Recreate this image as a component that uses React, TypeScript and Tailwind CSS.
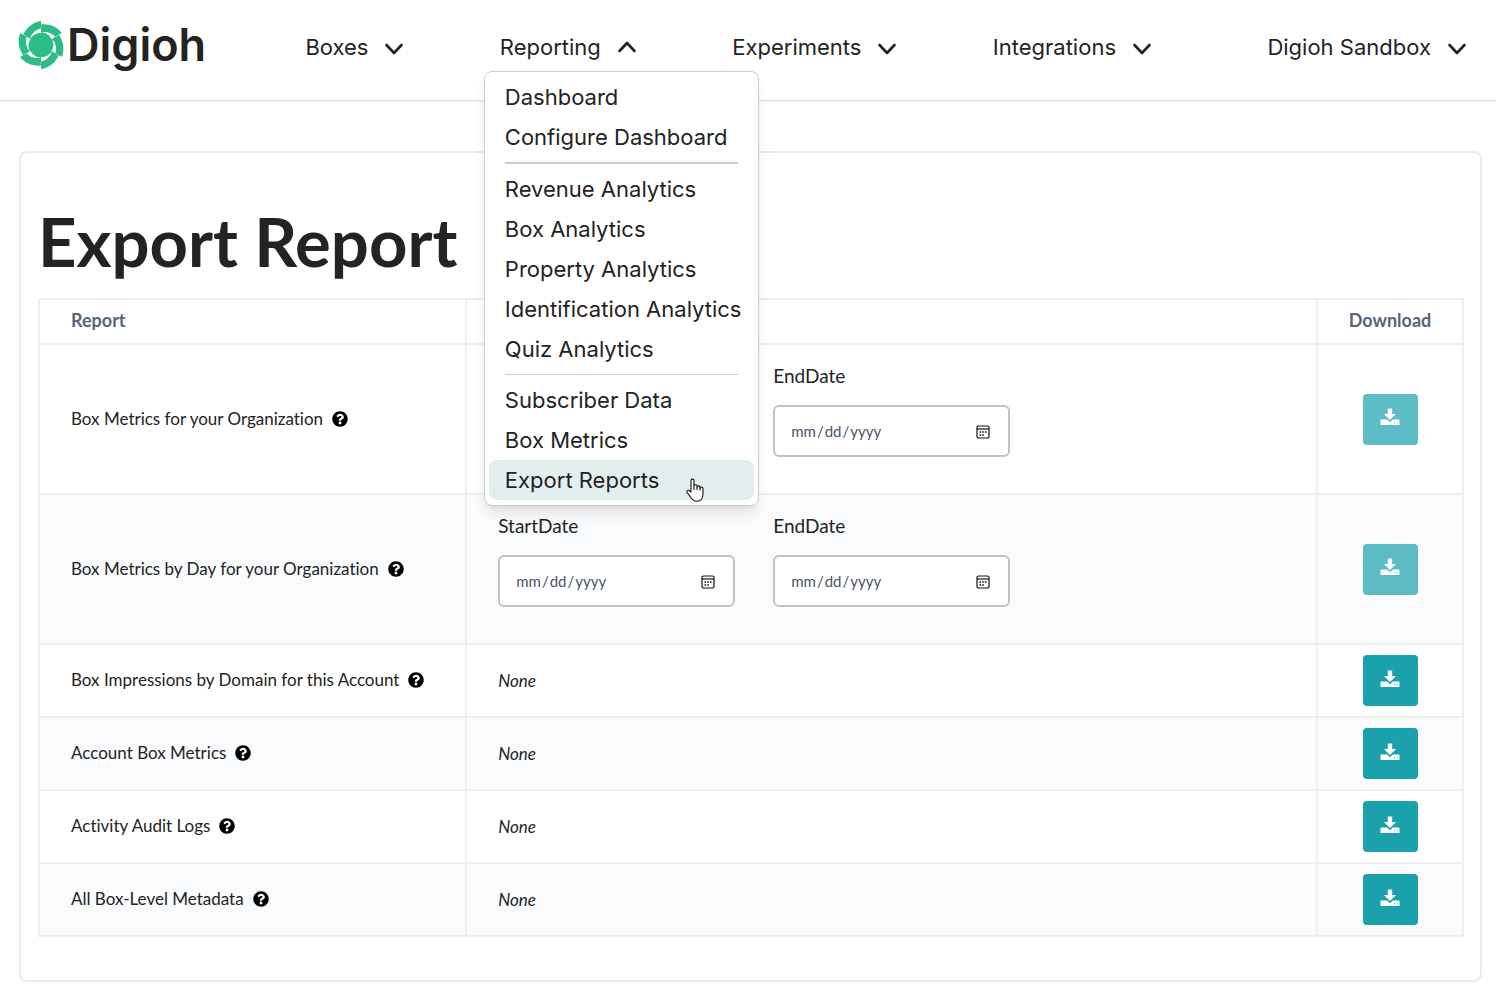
import React from 'react';
import { FaQuestionCircle } from 'react-icons/fa';

const NAV_ITEMS = [
  { label: 'Boxes', open: false },
  { label: 'Reporting', open: true },
  { label: 'Experiments', open: false },
  { label: 'Integrations', open: false },
  { label: 'Digioh Sandbox', open: false },
];

const MENU_GROUPS = [
  ['Dashboard', 'Configure Dashboard'],
  ['Revenue Analytics', 'Box Analytics', 'Property Analytics', 'Identification Analytics', 'Quiz Analytics'],
  ['Subscriber Data', 'Box Metrics', 'Export Reports'],
];

const REPORTS = [
  { name: 'Box Metrics for your Organization', id: 'org', dates: true },
  { name: 'Box Metrics by Day for your Organization', id: 'org-day', dates: true },
  { name: 'Box Impressions by Domain for this Account', id: 'domain', dates: false },
  { name: 'Account Box Metrics', id: 'account', dates: false },
  { name: 'Activity Audit Logs', id: 'audit', dates: false },
  { name: 'All Box-Level Metadata', id: 'metadata', dates: false },
];

const BLADES = [0, 60, 120, 180, 240, 300];

const Logo: React.FC = () => (
  <a href="#" className="flex w-[193px] items-center gap-0.5 text-[#232323]" aria-label="Digioh">
    <svg viewBox="-25 -25 50 50" className="h-12 w-12 shrink-0" aria-hidden="true">
      <circle r="18" fill="#2bbd85" />
      {BLADES.map((angle) => (
        <path key={angle} transform={`rotate(${angle})`} d="M0-12L-12-8L-18.5-10.7C-15.5-18-8-24 0-25Z" fill="#2bbd85" />
      ))}
      {BLADES.map((angle) => (
        <path key={angle} transform={`rotate(${angle})`} d="M-11.4-6.6C-10-11.5-6-16 0-17.3V-12.6C-4.5-12.8-8.5-11-11.4-6.6Z" fill="#fff" />
      ))}
    </svg>
    <span className="font-['Inter'] text-[45px] leading-[50px] font-semibold">Digioh</span>
  </a>
);

const Chevron: React.FC<{ up?: boolean }> = ({ up }) => (
  <svg viewBox="0 0 20 20" className="size-5" fill="none" stroke="#232323" strokeWidth="2.6" strokeLinecap="round" strokeLinejoin="round" aria-hidden="true">
    <path d={up ? 'M2.5 14L10 6L17.5 14' : 'M2.5 8L10 16L17.5 8'} />
  </svg>
);

const HandCursor: React.FC = () => (
  <svg viewBox="0 0 18 24" className="absolute top-[18px] left-[197px] h-6 w-[18px]" fill="#fff" stroke="#111" strokeWidth="1.1" strokeLinejoin="round" aria-hidden="true">
    <path d="M5 14V2.5C5 .6 8 .6 8 2.5V8C8 6.3 11 6.5 11 8.2V9C11 7.4 14 7.6 14 9.2V10C14 8.6 17 8.8 17 10.6V16C17 20.5 14.5 23.3 11 23.3C7.5 23.3 6.2 21.6 4.8 19.5L1.2 14.6C.2 13 2 11.6 3.4 12.8Z" />
    <path d="M8 8V12M11 9V12M14 10V12.5" />
  </svg>
);

const ReportingMenu: React.FC = () => (
  <div className="absolute top-[71px] -left-4 z-10 w-[275px] rounded-lg border border-[#cdcdcd] bg-white px-1 py-[5px] shadow-lg">
    {MENU_GROUPS.map((group, i) => (
      <ul key={i}>
        {i > 0 && (
          <li className={`mx-4 my-[5px] border-[#cdcdcd] ${i === 1 ? 'border-t-2' : 'border-t'}`} role="separator" />
        )}
        {group.map((item) => (
          <li key={item} className="relative">
            <a
              href="#"
              className={`block rounded-lg px-4 text-[22px] leading-10 whitespace-nowrap ${item === 'Export Reports' ? 'bg-[#e3eeee]' : ''}`}
            >
              {item}
            </a>
            {item === 'Export Reports' && <HandCursor />}
          </li>
        ))}
      </ul>
    ))}
  </div>
);

const DateField: React.FC<{ id: string; label: string }> = ({ id, label }) => (
  <div className="w-[237px]">
    <label htmlFor={id} className="block text-[19px] leading-6">{label}</label>
    <div className="relative mt-[17px]">
      <input
        id={id}
        type="date"
        className="h-[52px] w-full rounded-md border-2 border-[#c0c2c6] bg-white px-[15px] text-[15px] text-[#4a5568] [&::-webkit-calendar-picker-indicator]:opacity-0"
      />
      <svg viewBox="0 0 14 14" className="pointer-events-none absolute top-5 right-5 size-[14px]" fill="none" stroke="#111" aria-hidden="true">
        <rect x="1" y="1" width="12" height="12" rx="1.6" strokeWidth="1.2" />
        <path d="M1 4H13" strokeWidth="1.2" />
        <path d="M3.5 7H11M3.5 10H8.5" strokeWidth="1.6" strokeDasharray="1.6 1.1" />
      </svg>
    </div>
  </div>
);

const DownloadIcon: React.FC = () => (
  <svg viewBox="0 0 20 18" className="h-[18px] w-5" fill="#fff" aria-hidden="true">
    <path d="M7.8 0.5H12.2V6H16L10 12L4 6H7.8Z" />
    <path fillRule="evenodd" d="M1 11.4H7.2L10 14.2L12.8 11.4H19Q19.5 11.4 19.5 12V16.4Q19.5 17 19 17H1Q.5 17 .5 16.4V12Q.5 11.4 1 11.4ZM14 14.2V15.2H15V14.2ZM16.6 14.2V15.2H17.6V14.2Z" />
  </svg>
);

const App: React.FC = () => {
  return (
    <div className="min-h-screen bg-white pb-3 font-['Lato',sans-serif] text-[#232323] [font-variant-ligatures:none]">
      <header className="flex h-[101px] items-start justify-between border-b border-[#e0e0e0] pr-[29px] pl-[17px] font-['Inter',sans-serif] shadow-xs">
        <div className="pt-5">
          <Logo />
        </div>
        {NAV_ITEMS.map((item) => (
          <div key={item.label} className="relative last:ml-5">
            <button type="button" className="flex items-center gap-4 pt-8 text-[22px] leading-[30px]" aria-expanded={item.open}>
              {item.label}
              <Chevron up={item.open} />
            </button>
            {item.open && <ReportingMenu />}
          </div>
        ))}
      </header>

      <main className="mt-[50px] mr-[14px] ml-[19px] rounded-lg border-2 border-[#ebebeb] pt-12 pr-4 pb-[43px] pl-[17px]">
        <h1 className="text-[67px] leading-[80px] font-bold">Export Report</h1>
        <table className="mt-[17px] w-full table-fixed border-collapse text-[17px]">
          <colgroup>
            <col className="w-[30%]" />
            <col />
            <col className="w-[146px]" />
          </colgroup>
          <thead>
            <tr className="h-[45px] text-lg text-[#56657a]">
              <th className="border-2 border-[#eeefef] px-[31px] pb-1 text-left font-bold">Report</th>
              <th className="border-2 border-[#eeefef]" />
              <th className="border-2 border-[#eeefef] pb-1 font-bold">Download</th>
            </tr>
          </thead>
          <tbody>
            {REPORTS.map((report) => (
              <tr key={report.id} className="even:bg-[#f9fbfd]">
                <td className="border-2 border-[#eeefef] px-[31px] pb-px">
                  <div className="flex items-center gap-[9px] whitespace-nowrap">
                    {report.name}
                    <FaQuestionCircle className="size-4 shrink-0 text-black" />
                  </div>
                </td>
                <td className="border-2 border-[#eeefef] px-[31px]">
                  {report.dates ? (
                    <div className="flex h-[148px] gap-[38px] pt-[19px]">
                      <DateField id={`${report.id}-start`} label="StartDate" />
                      <DateField id={`${report.id}-end`} label="EndDate" />
                    </div>
                  ) : (
                    <em>None</em>
                  )}
                </td>
                <td className="border-2 border-[#eeefef] py-[10px] text-center">
                  <button
                    type="button"
                    disabled={report.dates}
                    aria-label={`Download ${report.name}`}
                    className="inline-flex h-[51px] w-[55px] items-center justify-center rounded-sm bg-[#1ba1ac] pb-1 align-middle disabled:opacity-70"
                  >
                    <DownloadIcon />
                  </button>
                </td>
              </tr>
            ))}
          </tbody>
        </table>
      </main>
    </div>
  );
};

export default App;
